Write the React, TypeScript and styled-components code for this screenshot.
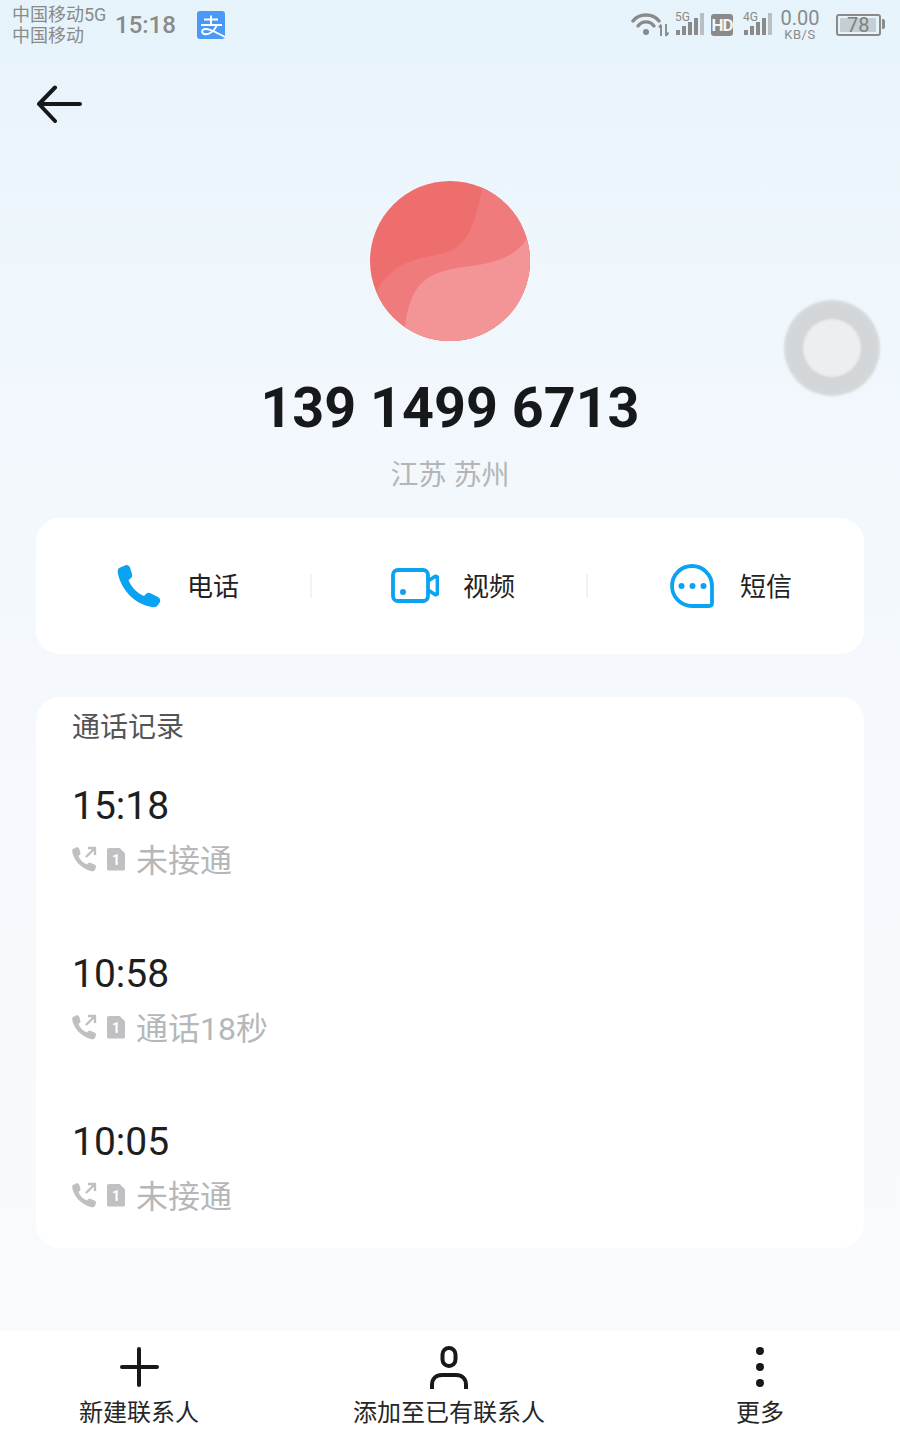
import React from 'react';
import styled, { createGlobalStyle } from 'styled-components';

const GlobalStyle = createGlobalStyle`
  html, body {
    margin: 0;
    padding: 0;
  }
  body {
    font-family: Roboto, 'Noto Sans CJK SC', sans-serif;
  }
`;

const Page = styled.div`
  width: 900px;
  height: 1440px;
  overflow: hidden;
  position: relative;
  display: flex;
  flex-direction: column;
  background: linear-gradient(180deg, #e6f3fa 0%, #f0f7fc 300px, #f6f9fd 800px, #f9fafc 1331px);
`;

const StatusBar = styled.div`
  height: 50px;
  display: flex;
  align-items: center;
  justify-content: space-between;
  padding: 0 13px 0 12px;
  color: #8a8a8a;
`;

const StatusLeft = styled.div`
  display: flex;
  align-items: center;
`;

const Carriers = styled.div`
  font-size: 18px;
  line-height: 21px;
  width: 103px;
  white-space: nowrap;
`;

const Clock = styled.div`
  font-size: 24px;
  font-weight: 500;
  width: 82px;
`;

const AppBadge = styled.svg`
  display: block;
  width: 28px;
  height: 28px;
`;

const StatusRight = styled.div`
  display: flex;
  align-items: center;
`;

const WifiIcon = styled.svg`
  display: block;
  margin-right: 6px;
`;

const SignalWrap = styled.div<{ $gap: number }>`
  width: 30px;
  height: 26px;
  position: relative;
  margin-right: ${(p) => p.$gap}px;
`;

const SignalTag = styled.span`
  position: absolute;
  left: 0;
  top: -2px;
  font-size: 12px;
  line-height: 14px;
`;

const HdBadge = styled.div`
  width: 22px;
  height: 22px;
  border-radius: 3px;
  background: #8a8a8a;
  color: #f0f6fb;
  font-size: 17px;
  font-weight: 700;
  line-height: 22px;
  text-align: center;
  letter-spacing: -1px;
  margin-right: 10px;
`;

const Speed = styled.div`
  width: 40px;
  margin: 0 16px 0 0;
  text-align: center;
  font-size: 20px;
  line-height: 19px;
  white-space: nowrap;
`;

const SpeedUnit = styled.div`
  font-size: 13px;
  line-height: 13px;
  letter-spacing: 0.6px;
`;

const Battery = styled.div`
  width: 37px;
  height: 14px;
  border: 2px solid #8a8a8a;
  border-radius: 3px;
  position: relative;
  padding: 2px;
  margin-right: 6px;
  &::after {
    content: '';
    position: absolute;
    right: -6px;
    top: 3px;
    width: 3px;
    height: 10px;
    background: #8a8a8a;
    border-radius: 0 2px 2px 0;
  }
`;

const BatteryFill = styled.div`
  height: 100%;
  background: #c4ced4;
  color: #7f7f7f;
  font-size: 20px;
  line-height: 14px;
  padding-left: 7px;
  white-space: nowrap;
`;

const BackButton = styled.div`
  height: 131px;
  padding: 35px 0 0 36px;
  box-sizing: border-box;
  svg {
    display: block;
  }
`;

const Header = styled.div`
  display: flex;
  flex-direction: column;
  align-items: center;
  height: 337px;
`;

const Avatar = styled.svg`
  display: block;
  width: 160px;
  height: 160px;
`;

const PhoneNumber = styled.div`
  margin-top: 34px;
  font-size: 55.7px;
  line-height: 66px;
  font-weight: 700;
  color: #17181a;
`;

const Location = styled.div`
  margin-top: 16px;
  font-size: 28px;
  line-height: 38px;
  color: #b3b5b7;
`;

const Card = styled.div`
  margin: 0 36px;
  background: #fff;
  border-radius: 24px;
`;

const ActionCard = styled(Card)`
  height: 136px;
  display: grid;
  grid-template-columns: 276px 276px 276px;
  align-items: center;
`;

const Action = styled.div<{ $offset: number; $divider?: boolean }>`
  display: flex;
  align-items: center;
  height: 24px;
  padding-left: ${(p) => p.$offset}px;
  border-right: ${(p) => (p.$divider ? '2px solid #f2f3f7' : '2px solid transparent')};
  font-size: 26px;
  color: #222;
  white-space: nowrap;
`;

const ActionLabel = styled.span`
  margin-bottom: 4px;
`;

const ActionIcon = styled.svg<{ $gap: number }>`
  flex: none;
  margin-right: ${(p) => p.$gap}px;
`;

const HistoryCard = styled(Card)`
  margin-top: 43px;
  height: 551px;
  padding: 0 36px;
  box-sizing: border-box;
`;

const HistoryTitle = styled.div`
  font-size: 28px;
  line-height: 62px;
  color: #555;
`;

const HistoryList = styled.div`
  display: flex;
  flex-direction: column;
  gap: 168px;
  margin-top: 20px;
`;

const HistoryRow = styled.div`
  height: 0;
`;

const CallTime = styled.div`
  font-size: 39px;
  line-height: 54px;
  color: #1d1e20;
`;

const CallInfo = styled.div`
  display: flex;
  align-items: center;
  height: 50px;
  color: #b6b7b9;
  font-size: 32px;
`;

const MissedSvg = styled.svg`
  flex: none;
  margin-top: 2px;
`;

const SimBadge = styled.div`
  width: 18px;
  height: 23px;
  margin: 2px 11px 0 10px;
  background: #bfc0c1;
  color: #fff;
  font-size: 14px;
  font-weight: 700;
  line-height: 24px;
  text-align: center;
  border-radius: 2px;
  clip-path: polygon(0 0, 68% 0, 100% 25%, 100% 100%, 0 100%);
`;

const Spacer = styled.div`
  flex: 1;
`;

const BottomBar = styled.div`
  height: 109px;
  background: #fff;
  display: grid;
  grid-template-columns: 278px 342px 280px;
`;

const BottomItem = styled.div`
  display: flex;
  flex-direction: column;
  align-items: center;
  padding-top: 14px;
  font-size: 24px;
  line-height: 34px;
  color: #262626;
  svg {
    display: block;
    margin-bottom: 7px;
  }
`;

const FloatBall = styled.div`
  position: absolute;
  left: 784px;
  top: 300px;
  width: 96px;
  height: 96px;
  border-radius: 50%;
  background: radial-gradient(circle, #d3d6d8 60%, #dee1e4 100%);
  filter: blur(1px);
  display: flex;
  align-items: center;
  justify-content: center;
  &::before {
    content: '';
    width: 58px;
    height: 58px;
    border-radius: 50%;
    background: #eceef0;
  }
`;

const SignalBars = ({ color }: { color: string }) => (
  <svg width="30" height="26" viewBox="0 0 30 26" style={{ position: 'absolute', left: 0, top: 0 }}>
    <rect x="1" y="18" width="4" height="5" fill={color} />
    <rect x="7" y="14" width="4" height="9" fill={color} />
    <rect x="13" y="10" width="4" height="13" fill={color} />
    <rect x="19" y="6" width="4" height="17" fill={color} />
    <rect x="25" y="1" width="4" height="22" fill="#b9c0c5" />
  </svg>
);

const MissedIcon = () => (
  <MissedSvg width="25" height="26" viewBox="0 0 25 26">
    <path
      d="M1 3 L5 1 C6 1 7 2 7.5 3.5 L8.5 7 C8.5 8 8 9 6.5 10 C8 14 11 17 15 18.5 C16 17 17 16.5 18 16.8 L22.5 18.5 C23.5 19 24 20 24 21 L23 24 C22 25.5 20.5 25.5 18.5 25 C9 22 2.5 15 0.5 7 C0 5 0 4 1 3 Z"
      fill="#bfc0c1"
    />
    <path d="M14 12 L22 4 M16 3 H23 V10" transform="translate(0 -1)" fill="none" stroke="#bfc0c1" strokeWidth="2.4" />
  </MissedSvg>
);

const records = [
  { time: '15:18', info: '未接通' },
  { time: '10:58', info: '通话18秒' },
  { time: '10:05', info: '未接通' },
];

const App = (): JSX.Element => (
  <>
    <GlobalStyle />
    <Page>
      <StatusBar>
        <StatusLeft>
          <Carriers>
            中国移动5G
            <br />
            中国移动
          </Carriers>
          <Clock>15:18</Clock>
          <AppBadge viewBox="0 0 28 28">
            <rect width="28" height="28" rx="3" fill="#4a98f8" />
            <path
              d="M7 8.5 H21 M14 4.5 V14 M4 14 H25 M20 14 C17 21 11 24 7.5 23 C4 22 4.5 18.5 8 18 C13 17.5 20 22 28 26"
              fill="none"
              stroke="#fff"
              strokeWidth="1.9"
            />
          </AppBadge>
        </StatusLeft>
        <StatusRight>
          <WifiIcon width="38" height="26" viewBox="0 0 38 26">
            <path d="M2 9 C8 1 22 1 28 9" fill="none" stroke="#8a8a8a" strokeWidth="3.4" strokeLinecap="round" />
            <path d="M7 14 C11 8.5 19 8.5 23 14" fill="none" stroke="#8a8a8a" strokeWidth="3.4" strokeLinecap="round" />
            <circle cx="15" cy="20" r="3" fill="#8a8a8a" />
            <path d="M30 24 V13 M28 15.5 L30 12.5 M35 12 V24 M35 24 L37.5 20.5" fill="none" stroke="#8a8a8a" strokeWidth="1.9" />
          </WifiIcon>
          <SignalWrap $gap={6}>
            <SignalBars color="#8a8a8a" />
            <SignalTag>5G</SignalTag>
          </SignalWrap>
          <HdBadge>HD</HdBadge>
          <SignalWrap $gap={7}>
            <SignalBars color="#8a8a8a" />
            <SignalTag>4G</SignalTag>
          </SignalWrap>
          <Speed>
            0.00
            <SpeedUnit>KB/S</SpeedUnit>
          </Speed>
          <Battery>
            <BatteryFill style={{ width: '78%' }}>78</BatteryFill>
          </Battery>
        </StatusRight>
      </StatusBar>

      <BackButton>
        <svg width="46" height="40" viewBox="0 0 46 40">
          <path d="M44 19 H3 M19 2.5 L3 19 L19 36" fill="none" stroke="#17181a" strokeWidth="4" strokeLinecap="round" strokeLinejoin="round" />
        </svg>
      </BackButton>

      <Header>
        <Avatar viewBox="0 0 160 160">
          <defs>
            <clipPath id="avatar-clip">
              <circle cx="80" cy="80" r="80" />
            </clipPath>
          </defs>
          <g clipPath="url(#avatar-clip)">
            <rect width="160" height="160" fill="#ee6e6e" />
            <path d="M113 5 C105 40 100 60 82 69 C62 79 28 72 7 109 L0 170 H170 V0 Z" fill="#ef7b7d" />
            <path d="M158 56 C146 76 125 83 93 86 C60 91 40 100 35 146 L40 170 H170 V50 Z" fill="#f39596" />
          </g>
        </Avatar>
        <PhoneNumber>139 1499 6713</PhoneNumber>
        <Location>江苏 苏州</Location>
      </Header>

      <ActionCard>
        <Action $offset={81} $divider>
          <ActionIcon $gap={26} width="44" height="44" viewBox="0 0 44 44">
            <path
              d="M2 4 L8 1.5 C10 0.5 12 1.5 13 3.5 L15 10 C15.5 12 15 13.5 13 15 L11.5 16 C14 23 20 29 27 32 L29 30 C30.5 28.5 32 28.5 34 29.5 L41 33 C43 34 43.5 36 43 38 L41 41 C39.5 43 37.5 43.5 34.5 43 C18 40 5 27 1 10 C0.5 7 0.5 5.5 2 4 Z"
              fill="#0aa3f1"
            />
          </ActionIcon>
          <ActionLabel>电话</ActionLabel>
        </Action>
        <Action $offset={79} $divider>
          <ActionIcon $gap={24} width="48" height="36" viewBox="0 0 48 36">
            <rect x="2" y="2" width="35" height="31" rx="5" fill="none" stroke="#0aa3f1" strokeWidth="3.8" />
            <circle cx="12" cy="24" r="3" fill="#0aa3f1" />
            <path d="M37 13 L44 8.5 C45.5 8 46.5 9 46.5 10 V25 C46.5 26 45.5 27 44 26.5 L37 22" fill="none" stroke="#0aa3f1" strokeWidth="3.8" strokeLinejoin="round" />
          </ActionIcon>
          <ActionLabel>视频</ActionLabel>
        </Action>
        <Action $offset={82}>
          <ActionIcon $gap={26} width="44" height="44" viewBox="0 0 44 44">
            <path d="M22 2 C33 2 42 11 42 22 V39 C42 41 41 42 39 42 H22 C11 42 2 33 2 22 C2 11 11 2 22 2 Z" fill="none" stroke="#0aa3f1" strokeWidth="3.8" />
            <circle cx="11.5" cy="22" r="3" fill="#0aa3f1" />
            <circle cx="22.5" cy="22" r="3" fill="#0aa3f1" />
            <circle cx="33.5" cy="22" r="3" fill="#0aa3f1" />
          </ActionIcon>
          <ActionLabel>短信</ActionLabel>
        </Action>
      </ActionCard>

      <HistoryCard>
        <HistoryTitle>通话记录</HistoryTitle>
        <HistoryList>
          {records.map((r) => (
            <HistoryRow key={r.time}>
              <CallTime>{r.time}</CallTime>
              <CallInfo>
                <MissedIcon />
                <SimBadge>1</SimBadge>
                {r.info}
              </CallInfo>
            </HistoryRow>
          ))}
        </HistoryList>
      </HistoryCard>

      <Spacer />

      <BottomBar>
        <BottomItem>
          <svg width="44" height="44" viewBox="0 0 44 44">
            <path d="M22 4 V40 M5 22 H40" stroke="#17181a" strokeWidth="4" strokeLinecap="round" />
          </svg>
          新建联系人
        </BottomItem>
        <BottomItem>
          <svg width="44" height="44" viewBox="0 0 44 44">
            <rect x="15.5" y="3" width="13" height="18" rx="6.5" fill="none" stroke="#17181a" strokeWidth="4" />
            <path d="M5 44 V40 C5 34 9 30 15 30 H29 C35 30 39 34 39 40 V44" fill="none" stroke="#17181a" strokeWidth="4" strokeLinecap="round" />
          </svg>
          添加至已有联系人
        </BottomItem>
        <BottomItem>
          <svg width="44" height="44" viewBox="0 0 44 44">
            <circle cx="22" cy="6" r="4" fill="#17181a" />
            <circle cx="22" cy="22" r="4" fill="#17181a" />
            <circle cx="22" cy="38" r="4" fill="#17181a" />
          </svg>
          更多
        </BottomItem>
      </BottomBar>

      <FloatBall />
    </Page>
  </>
);

export default App;
